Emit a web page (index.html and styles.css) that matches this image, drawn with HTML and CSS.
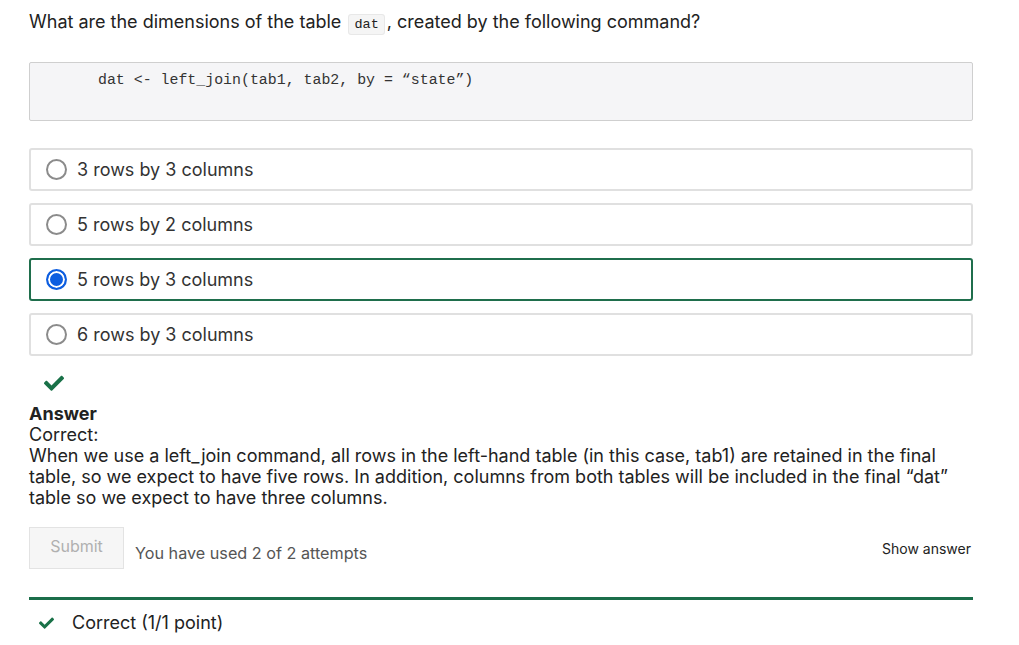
FILE: index.html
```html
<!DOCTYPE html>
<html>
<head>
<meta charset="utf-8">
<link rel="stylesheet" href="styles.css">
</head>
<body>
<div class="page">
  <p class="question">What are the dimensions of the table <code class="inline">dat</code>, created by the following command?</p>
  <div class="codeblock"><pre>dat &lt;- left_join(tab1, tab2, by = “state”)</pre></div>
  <div class="options">
    <label class="option"><span class="radio"></span><span>3 rows by 3 columns</span></label>
    <label class="option"><span class="radio"></span><span>5 rows by 2 columns</span></label>
    <label class="option selected"><span class="radio checked"></span><span>5 rows by 3 columns</span></label>
    <label class="option"><span class="radio"></span><span>6 rows by 3 columns</span></label>
  </div>
  <div class="status-icon">
    <svg width="20" height="16" viewBox="0 0 512 400"><path fill="#197148" d="M173.9 389.4L7.5 223c-10-10-10-26.2 0-36.2l36.2-36.2c10-10 26.2-10 36.2 0L192 262.7 432.1 22.6c10-10 26.2-10 36.2 0l36.2 36.2c10 10 10 26.2 0 36.2L210.1 389.4c-10 10-26.2 10-36.2 0z"/></svg>
  </div>
  <div class="answer">
    <div class="answer-title">Answer</div>
    <div>Correct:</div>
    <div>When we use a left_join command, all rows in the left-hand table (in this case, tab1) are retained in the final table, so we expect to have five rows. In addition, columns from both tables will be included in the final “dat” table so we expect to have three columns.</div>
  </div>
  <div class="actions">
    <button class="submit">Submit</button>
    <span class="attempts">You have used 2 of 2 attempts</span>
    <span class="show">Show answer</span>
  </div>
  <div class="result">
    <svg width="15" height="12" viewBox="0 0 512 400"><path fill="#197148" d="M173.9 389.4L7.5 223c-10-10-10-26.2 0-36.2l36.2-36.2c10-10 26.2-10 36.2 0L192 262.7 432.1 22.6c10-10 26.2-10 36.2 0l36.2 36.2c10 10 10 26.2 0 36.2L210.1 389.4c-10 10-26.2 10-36.2 0z"/></svg>
    <span>Correct (1/1 point)</span>
  </div>
</div>
</body>
</html>
```
FILE: styles.css
```css
* { box-sizing: border-box; }
html, body { margin: 0; padding: 0; background: #fff; }
body { font-family: Inter, "Noto Sans", sans-serif; color: #222; }
.page { width: 944px; margin-left: 29px; padding-top: 10px; }
.question { margin: 0; font-size: 18px; line-height: 24px; color: #222; }
.inline {
  font-family: "Liberation Mono", monospace; font-size: 13.5px;
  background: #f5f5f5; border: 1px solid #e8e8e8; border-radius: 3px;
  padding: 2px 5px; margin: 0 2px;
}
.codeblock {
  margin-top: 25px; height: 59px; background: #f5f5f7;
  border: 1px solid #cfcfcf; border-radius: 2px; padding: 9px 0 0 68px;
}
.codeblock pre { margin: 0; font-family: "Liberation Mono", monospace; font-size: 14.9px; line-height: 16px; color: #333; }
.options { margin-top: 27px; display: flex; flex-direction: column; gap: 12px; }
.option {
  height: 43px; border: 2px solid #e0e0e0; border-radius: 3px;
  display: flex; align-items: center; padding-left: 15px; gap: 10px;
  font-size: 18px; color: #333;
}
.option.selected { border-color: #1f6e4c; }
.radio { width: 21px; height: 21px; border-radius: 50%; border: 2px solid #8b8b8b; background: #fff; flex: none; }
.radio.checked { border: 2px solid #0d5ee0; background: #0d5ee0; box-shadow: inset 0 0 0 2px #fff; }
.status-icon { margin-top: 19px; padding-left: 15px; height: 20px; }
.answer { margin-top: 8px; font-size: 18px; line-height: 21px; color: #222; width: 935px; }
.answer-title { font-weight: 700; }
.actions { margin-top: 19px; display: flex; align-items: flex-start; }
.submit {
  width: 95px; height: 42px; background: #f6f6f6; border: 1px solid #e3e3e3;
  font-family: Inter, sans-serif; font-size: 16px; color: #b0b0b0; padding: 0 0 4px; border-radius: 0;
}
.attempts { margin-left: 11px; margin-top: 16px; font-size: 16.2px; color: #555; }
.show { margin-left: auto; margin-top: 13px; margin-right: 2px; font-size: 14px; color: #222; }
.result { margin-top: 28px; border-top: 3px solid #1b6e4a; display: flex; align-items: center; padding: 12px 0 0 10px; gap: 18px; font-size: 18px; color: #222; }
.result svg { margin-top: 1px; }
```
